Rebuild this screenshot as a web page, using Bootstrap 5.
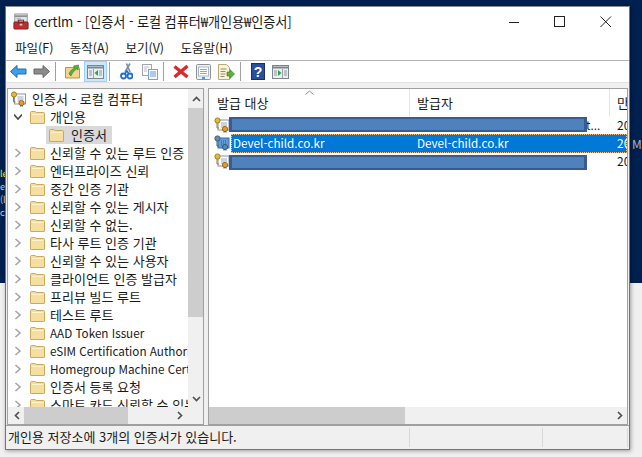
<!DOCTYPE html>
<html lang="ko"><head><meta charset="utf-8"><title>certlm</title>
<link rel="stylesheet" href="https://cdn.jsdelivr.net/npm/bootstrap@5.3.0/dist/css/bootstrap.min.css">
<style>
html,body{margin:0;height:457px;overflow:hidden}
body{width:642px;background:linear-gradient(#00204f 0,#00204f 283px,#f0f0f0 283px);font-family:"Noto Sans CJK KR","Liberation Sans",sans-serif;font-size:13px;color:#1a1a1a;position:relative;line-height:18px;padding:6px 12px 7px 5px}
.lat{font-size:11.7px}
.desk-bit{position:absolute;left:0;width:5px;height:12px;overflow:hidden;font-size:9px;color:#c8ccd4;white-space:nowrap;line-height:12px}
.desk-ma{position:absolute;left:632px;top:137px;color:#aab0ba;font-size:12px;line-height:14px;width:10px;overflow:hidden}
.win{height:444px;width:625px;background:#fff;border:1px solid #70757c;border-top-color:#8a8f96;box-shadow:1px 1px 4px rgba(0,0,0,.35)}
.titlebar{height:30px;padding-left:7px;gap:5px;font-size:13.2px}
.titletxt{white-space:nowrap;letter-spacing:-.1px}
.winbtns{margin-left:auto;gap:0}
.wb{width:46px;height:26px;display:flex;align-items:center;justify-content:center}
.menurow{height:23px;padding-left:9px;gap:16.5px;font-size:12.5px;border-bottom:1px solid #b4b4b4;box-sizing:content-box}
.toolrow{height:23px;padding-left:1px;border-bottom:1px solid #e3e3e3}
.tb{width:23px;height:21px;display:flex;align-items:center;justify-content:center;border:1px solid transparent}
.tb.on{background:#cce8ff;border-color:#99d1ff}
.tsep{width:1px;height:19px;background:#a0a0a0;margin:0 5px 0 2px}
.band{height:5px;background:#f0f0f0}
.panes{height:339px;background:#f0f0f0;padding:0 1px;gap:4px}
.pane{border:1px solid #a0a0a0;background:#fff;position:relative;overflow:hidden}
.lp{width:197px}.rp{width:420px}
.treeview{position:absolute;left:0;top:1px;width:180px;height:318px;overflow:hidden}
.tr{height:18px;display:flex;align-items:center;white-space:nowrap;position:relative}
.tr svg{flex:none}
.chev{width:8px;margin-left:6px;margin-right:8px;height:12px}
.tr .fold{margin-right:5px}
.hilite{background:#d9d9d9;padding-right:5px;height:18px;display:flex;align-items:center}
.vbar{position:absolute;left:180px;top:0;width:16px;height:320px;background:#f0f0f0}
.vthumb{position:absolute;left:0;top:19px;width:16px;height:209px;background:#cdcdcd}
.hbar{position:absolute;left:0;bottom:0;height:17px;background:#f0f0f0}
.hthumb{position:absolute;left:16px;top:0;height:17px;background:#cdcdcd}
.arr{position:absolute}
.colhead{height:27px;position:relative}
.colhead span{position:absolute;top:5px;white-space:nowrap}
.colsep{position:absolute;top:0;width:1px;height:27px;background:#e5e5e5}
.lrow{height:18px;position:relative;white-space:nowrap}
.lrow svg{position:absolute;left:5px;top:1px}
.lrow .dt{position:absolute;left:408px;top:0;font-size:12px}
.lrow .c1{position:absolute;left:24px;top:0}
.lrow .c2{position:absolute;left:208px;top:0}
.lrow.sel{color:#fff}
.selbar{position:absolute;left:22px;right:0;top:0;bottom:-1px;background:#0078d7;border:1px dotted #e8c48c}
.redact{position:absolute;left:20px;width:358px;top:1px;height:15px;background:#4f81bd;border:solid #3b5b8e;border-width:2px 3px}
.redact.low{top:3px}
.status{height:24px;background:#f0f0f0;border-top:1px solid #a0a0a0;padding-left:2px;position:relative;white-space:nowrap;line-height:21px}
.ssep{position:absolute;top:2px;width:1px;height:19px;background:#d8d8d8}
</style></head><body>
<svg width="0" height="0" class="position-absolute">
<defs>
<symbol id="f" viewBox="0 0 15 14"><path d="M.5 2.500Q.5 1.500 1.500 1.500H5l1.200 1H13.500q1 0 1 1V13q0 .5-.5.5H1q-.5 0-.5-.5Z" fill="#f5dfa0" stroke="#cfa95a"/><path d="M2 4.500H13" stroke="#fdf3d0"/></symbol>
<symbol id="ch" viewBox="0 0 8 12"><path d="M1.500 2 6 6 1.500 10" fill="none" stroke="#a6a6a6" stroke-width="1.600"/></symbol>
<symbol id="cert" viewBox="0 0 16 16"><rect x="4" y="3" width="11" height="10" fill="#fdfdfd" stroke="#8a94a8"/><path d="M7 6h6M7 8h6M7 10h3" stroke="#9ab"/><circle cx="3.500" cy="3.500" r="2.600" fill="#e8b93a" stroke="#a97b14"/><path d="M3 6v5h2" stroke="#a97b14" fill="none"/><circle cx="11" cy="12" r="2.600" fill="#e79a2b" stroke="#9c6a12"/><path d="M10 14l-.5 2 1.500-1 1.500 1-.5-2" fill="#2a6fb8"/></symbol>
<symbol id="certsel" viewBox="0 0 16 16"><rect x="4" y="3" width="11" height="10" fill="#5f9bd8" stroke="#3e6d9e"/><path d="M7 6h6M7 8h6M7 10h3" stroke="#2a5f9c" stroke-dasharray="1 1"/><circle cx="3.500" cy="3.500" r="2.600" fill="#5f92a8" stroke="#3d5f78"/><path d="M3 6v5h2" stroke="#3d5f78" fill="none"/><circle cx="11" cy="12" r="2.600" fill="#5a8aa0" stroke="#365a70"/><path d="M10 14l-.5 2 1.500-1 1.500 1-.5-2" fill="#1f5fa8"/></symbol>
</defs></svg>
<span class="desk-bit" style="top:168px;color:#e6e34a">le</span>
<span class="desk-bit" style="top:181px">er</span>
<span class="desk-bit" style="top:194px">(l</span>
<span class="desk-bit" style="top:207px">ct</span>
<span class="desk-ma">Ma</span>
<div class="win d-flex flex-column">
 <div class="titlebar d-flex align-items-center">
  <svg width="16" height="17" viewBox="0 0 18 19"><rect x="2" y="1" width="14" height="10" fill="#e4e6ea" stroke="#8d8f96"/><path d="M2 3.500h14" stroke="#8d8f96" stroke-width="2"/><path d="M4 6h5M4 8h5" stroke="#a9acb4"/><rect x="1" y="10" width="16" height="8" rx="1" fill="#b8312f" stroke="#7d1b1b"/><rect x="6" y="8" width="6" height="3" fill="none" stroke="#7d1b1b"/><rect x="7.500" y="12" width="3" height="2" fill="#f3c3b8"/></svg>
  <span class="titletxt">certlm - [인증서 - 로컬 컴퓨터₩개인용₩인증서]</span>
  <div class="winbtns d-flex">
   <div class="wb"><svg width="12" height="12"><path d="M1 6.500h10" stroke="#222"/></svg></div>
   <div class="wb"><svg width="12" height="12"><rect x=".5" y=".5" width="10" height="10" fill="none" stroke="#222"/></svg></div>
   <div class="wb"><svg width="12" height="12"><path d="M.5.500l10.500 10.500M11 .5.500 11" stroke="#222"/></svg></div>
  </div>
 </div>
 <div class="menurow d-flex align-items-center"><span>파일(F)</span><span>동작(A)</span><span>보기(V)</span><span>도움말(H)</span></div>
 <div class="toolrow d-flex align-items-center">
  <div class="tb"><svg width="17" height="15" viewBox="0 0 17 14"><path d="M.5 7 7 1v3.500h9v5H7V13Z" fill="#3f9fe6" stroke="#1f6eb5"/></svg></div>
  <div class="tb"><svg width="17" height="15" viewBox="0 0 17 14"><path d="M16.500 7 10 1v3.500H1v5h9V13Z" fill="#8b8b8b" stroke="#666"/></svg></div>
  <div class="tsep"></div>
  <div class="tb"><svg width="15" height="15" viewBox="0 0 15 15"><path d="M.5 3.500H13.500a1 1 0 0 1 1 1V14H.5Z" fill="#f3d58f" stroke="#b99349"/><path d="M4 10C5 7 7 5 10 4L8.500 2 13.500 1 13 6 11.500 5C9 7 7 9 6 12Z" fill="#58b23c" stroke="#2f7d1d" stroke-width=".6"/></svg></div>
  <div class="tb on"><svg width="17" height="14" viewBox="0 0 17 14"><rect x=".5" y=".5" width="16" height="13" fill="#eceff2" stroke="#7b8590"/><path d="M1 2.500h15" stroke="#7b8590" stroke-width="2"/><path d="M6.500 4v9" stroke="#9aa3ad"/><path d="M2 6h3M2 8h3M2 10h3M12 6h3M12 8h3M12 10h3" stroke="#8d96a0"/><path d="M11 5v6L7.500 8Z" fill="#2fa34a"/></svg></div>
  <div class="tsep"></div>
  <div class="tb"><svg width="13" height="17" viewBox="0 0 13 17"><path d="M10 .5 5 9M6.500.5 10 9" stroke="#7f8fa6" stroke-width="1.700"/><circle cx="3.500" cy="13" r="2.500" fill="none" stroke="#1c6fd0" stroke-width="1.800"/><circle cx="10" cy="13" r="2.500" fill="none" stroke="#1c6fd0" stroke-width="1.800"/><path d="M4.500 11 7 8l2 3" fill="none" stroke="#1c6fd0" stroke-width="1.400"/></svg></div>
  <div class="tb"><svg width="16" height="16" viewBox="0 0 16 16"><rect x=".5" y=".5" width="9" height="11" fill="#fff" stroke="#a0a6b0"/><rect x="6.500" y="5.500" width="9" height="10" fill="#f6f9fd" stroke="#7fa0c8"/><path d="M8 8h6M8 10h6M8 12h6" stroke="#6f9ad0"/><path d="M2 3h5M2 5h3M2 7h3" stroke="#bbb"/></svg></div>
  <div class="tsep"></div>
  <div class="tb"><svg width="16" height="15" viewBox="0 0 16 15"><path d="M1.500 2.500 14.500 13M14.500 2 1.500 13" stroke="#d92b2b" stroke-width="3.500"/></svg></div>
  <div class="tb"><svg width="15" height="16" viewBox="0 0 15 16"><rect x=".5" y=".5" width="14" height="15" rx="1" fill="#eef0f2" stroke="#8d9299"/><rect x="2.500" y="3" width="10" height="9" fill="#fff" stroke="#b0b5bb"/><path d="M4 5.500h7M4 7.500h7M4 9.500h7" stroke="#9aa"/><rect x="6" y="13" width="3" height="2" fill="#3f9fe6"/></svg></div>
  <div class="tb"><svg width="17" height="16" viewBox="0 0 17 16"><path d="M.5.500h8l3 3v12H.5Z" fill="#fbf3d6" stroke="#b7aa7a"/><path d="M2.500 5h6M2.500 7.500h5M2.500 10h5M2.500 12.500h4" stroke="#8c8c80"/><path d="M9 8h3V5.500L16.500 10 12 14.500V12H9Z" fill="#58b23c" stroke="#2f7d1d" stroke-width=".6"/></svg></div>
  <div class="tsep"></div>
  <div class="tb"><svg width="14" height="17" viewBox="0 0 14 17"><rect x=".5" y=".5" width="13" height="16" fill="#2a4f9e" stroke="#1b2f6b"/><text x="7" y="13.500" text-anchor="middle" font-family="Liberation Sans" font-weight="700" font-size="14" fill="#fff">?</text></svg></div>
  <div class="tb"><svg width="17" height="14" viewBox="0 0 17 14"><rect x=".5" y=".5" width="16" height="13" fill="#eceff2" stroke="#7b8590"/><path d="M1 2.500h15" stroke="#7b8590" stroke-width="2"/><path d="M10.500 4v9" stroke="#9aa3ad"/><path d="M2 6h3M2 8h3M2 10h3M12 6h3M12 8h3M12 10h3" stroke="#8d96a0"/><path d="M6 5v6l3.500-3Z" fill="#2fa34a"/></svg></div>
 </div>
 <div class="band"></div>
 <div class="panes d-flex">
  <div class="pane lp">
   <div class="treeview">
    <div class="tr"><svg width="17" height="16" viewBox="0 0 16 16" style="margin:0 5px 0 2px"><use href="#cert"/></svg>인증서 - 로컬 컴퓨터</div>
    <div class="tr"><svg class="chev" viewBox="0 0 8 12"><path d="M0 3.500 4 8 8 3.500" fill="none" stroke="#444" stroke-width="1.500"/></svg><svg class="fold" width="15" height="14"><use href="#f"/></svg>개인용</div>
    <div class="tr" style="padding-left:38px"><span class="hilite"><svg class="fold" width="15" height="14" style="margin:0 7px 0 3px"><use href="#f"/></svg>인증서</span></div>
    <div class="tr"><svg class="chev"><use href="#ch"/></svg><svg class="fold" width="15" height="14"><use href="#f"/></svg>신뢰할 수 있는 루트 인증 기관</div>
    <div class="tr"><svg class="chev"><use href="#ch"/></svg><svg class="fold" width="15" height="14"><use href="#f"/></svg>엔터프라이즈 신뢰</div>
    <div class="tr"><svg class="chev"><use href="#ch"/></svg><svg class="fold" width="15" height="14"><use href="#f"/></svg>중간 인증 기관</div>
    <div class="tr"><svg class="chev"><use href="#ch"/></svg><svg class="fold" width="15" height="14"><use href="#f"/></svg>신뢰할 수 있는 게시자</div>
    <div class="tr"><svg class="chev"><use href="#ch"/></svg><svg class="fold" width="15" height="14"><use href="#f"/></svg>신뢰할 수 없는.</div>
    <div class="tr"><svg class="chev"><use href="#ch"/></svg><svg class="fold" width="15" height="14"><use href="#f"/></svg>타사 루트 인증 기관</div>
    <div class="tr"><svg class="chev"><use href="#ch"/></svg><svg class="fold" width="15" height="14"><use href="#f"/></svg>신뢰할 수 있는 사용자</div>
    <div class="tr"><svg class="chev"><use href="#ch"/></svg><svg class="fold" width="15" height="14"><use href="#f"/></svg>클라이언트 인증 발급자</div>
    <div class="tr"><svg class="chev"><use href="#ch"/></svg><svg class="fold" width="15" height="14"><use href="#f"/></svg>프리뷰 빌드 루트</div>
    <div class="tr"><svg class="chev"><use href="#ch"/></svg><svg class="fold" width="15" height="14"><use href="#f"/></svg>테스트 루트</div>
    <div class="tr lat"><svg class="chev"><use href="#ch"/></svg><svg class="fold" width="15" height="14"><use href="#f"/></svg>AAD Token Issuer</div>
    <div class="tr lat"><svg class="chev"><use href="#ch"/></svg><svg class="fold" width="15" height="14"><use href="#f"/></svg>eSIM Certification Authorities</div>
    <div class="tr lat"><svg class="chev"><use href="#ch"/></svg><svg class="fold" width="15" height="14"><use href="#f"/></svg>Homegroup Machine Certificates</div>
    <div class="tr"><svg class="chev"><use href="#ch"/></svg><svg class="fold" width="15" height="14"><use href="#f"/></svg>인증서 등록 요청</div>
    <div class="tr"><svg class="chev"><use href="#ch"/></svg><svg class="fold" width="15" height="14"><use href="#f"/></svg>스마트 카드 신뢰할 수 있는 루트</div>
   </div>
   <div class="vbar">
    <div class="vthumb"></div>
    <svg class="arr" style="left:4px;top:7px" width="9" height="6"><path d="M1 5 4.500 1.500 8 5" fill="none" stroke="#505050" stroke-width="1.700"/></svg>
    <svg class="arr" style="left:4px;top:307px" width="9" height="6"><path d="M1 1 4.500 4.500 8 1" fill="none" stroke="#505050" stroke-width="1.700"/></svg>
   </div>
   <div class="hbar" style="width:180px"><div class="hthumb" style="width:104px"></div>
    <svg class="arr" style="left:6px;top:4px" width="6" height="9"><path d="M5 1 1.500 4.500 5 8" fill="none" stroke="#505050" stroke-width="1.700"/></svg>
    <svg class="arr" style="left:169px;top:4px" width="6" height="9"><path d="M1 1 4.500 4.500 1 8" fill="none" stroke="#505050" stroke-width="1.700"/></svg>
   </div>
   <div class="hbar" style="left:180px;width:16px"></div>
  </div>
  <div class="pane rp">
   <div class="colhead">
    <span style="left:8px">발급 대상</span><span style="left:208px">발급자</span><span style="left:408px">만료 날짜</span>
    <div class="colsep" style="left:200px"></div><div class="colsep" style="left:400px"></div>
    <svg class="arr" style="left:96px;top:1px" width="9" height="5"><path d="M.5 4.500 4.500 1 8.500 4.500" fill="none" stroke="#888"/></svg>
   </div>
   <div class="lrow"><svg width="16" height="16"><use href="#cert"/></svg><span class="c2 lat" style="left:377px">t...</span><span class="dt">20</span><div class="redact"></div></div>
   <div class="lrow sel"><div class="selbar"></div><svg width="16" height="16"><use href="#certsel"/></svg><span class="c1 lat">Devel-child.co.kr</span><span class="c2 lat">Devel-child.co.kr</span><span class="dt">20</span></div>
   <div class="lrow"><svg width="16" height="16"><use href="#cert"/></svg><span class="dt">20</span><div class="redact low"></div></div>
   <div class="hbar" style="width:420px"><div class="hthumb" style="left:0;width:196px"></div>
    <svg class="arr" style="left:408px;top:4px" width="6" height="9"><path d="M1 1 4.500 4.500 1 8" fill="none" stroke="#505050" stroke-width="1.700"/></svg>
   </div>
  </div>
 </div>
 <div class="status">개인용 저장소에 3개의 인증서가 있습니다.
  <div class="ssep" style="left:403px"></div><div class="ssep" style="left:536px"></div><div class="ssep" style="left:621px"></div>
 </div>
</div>
</body></html>
